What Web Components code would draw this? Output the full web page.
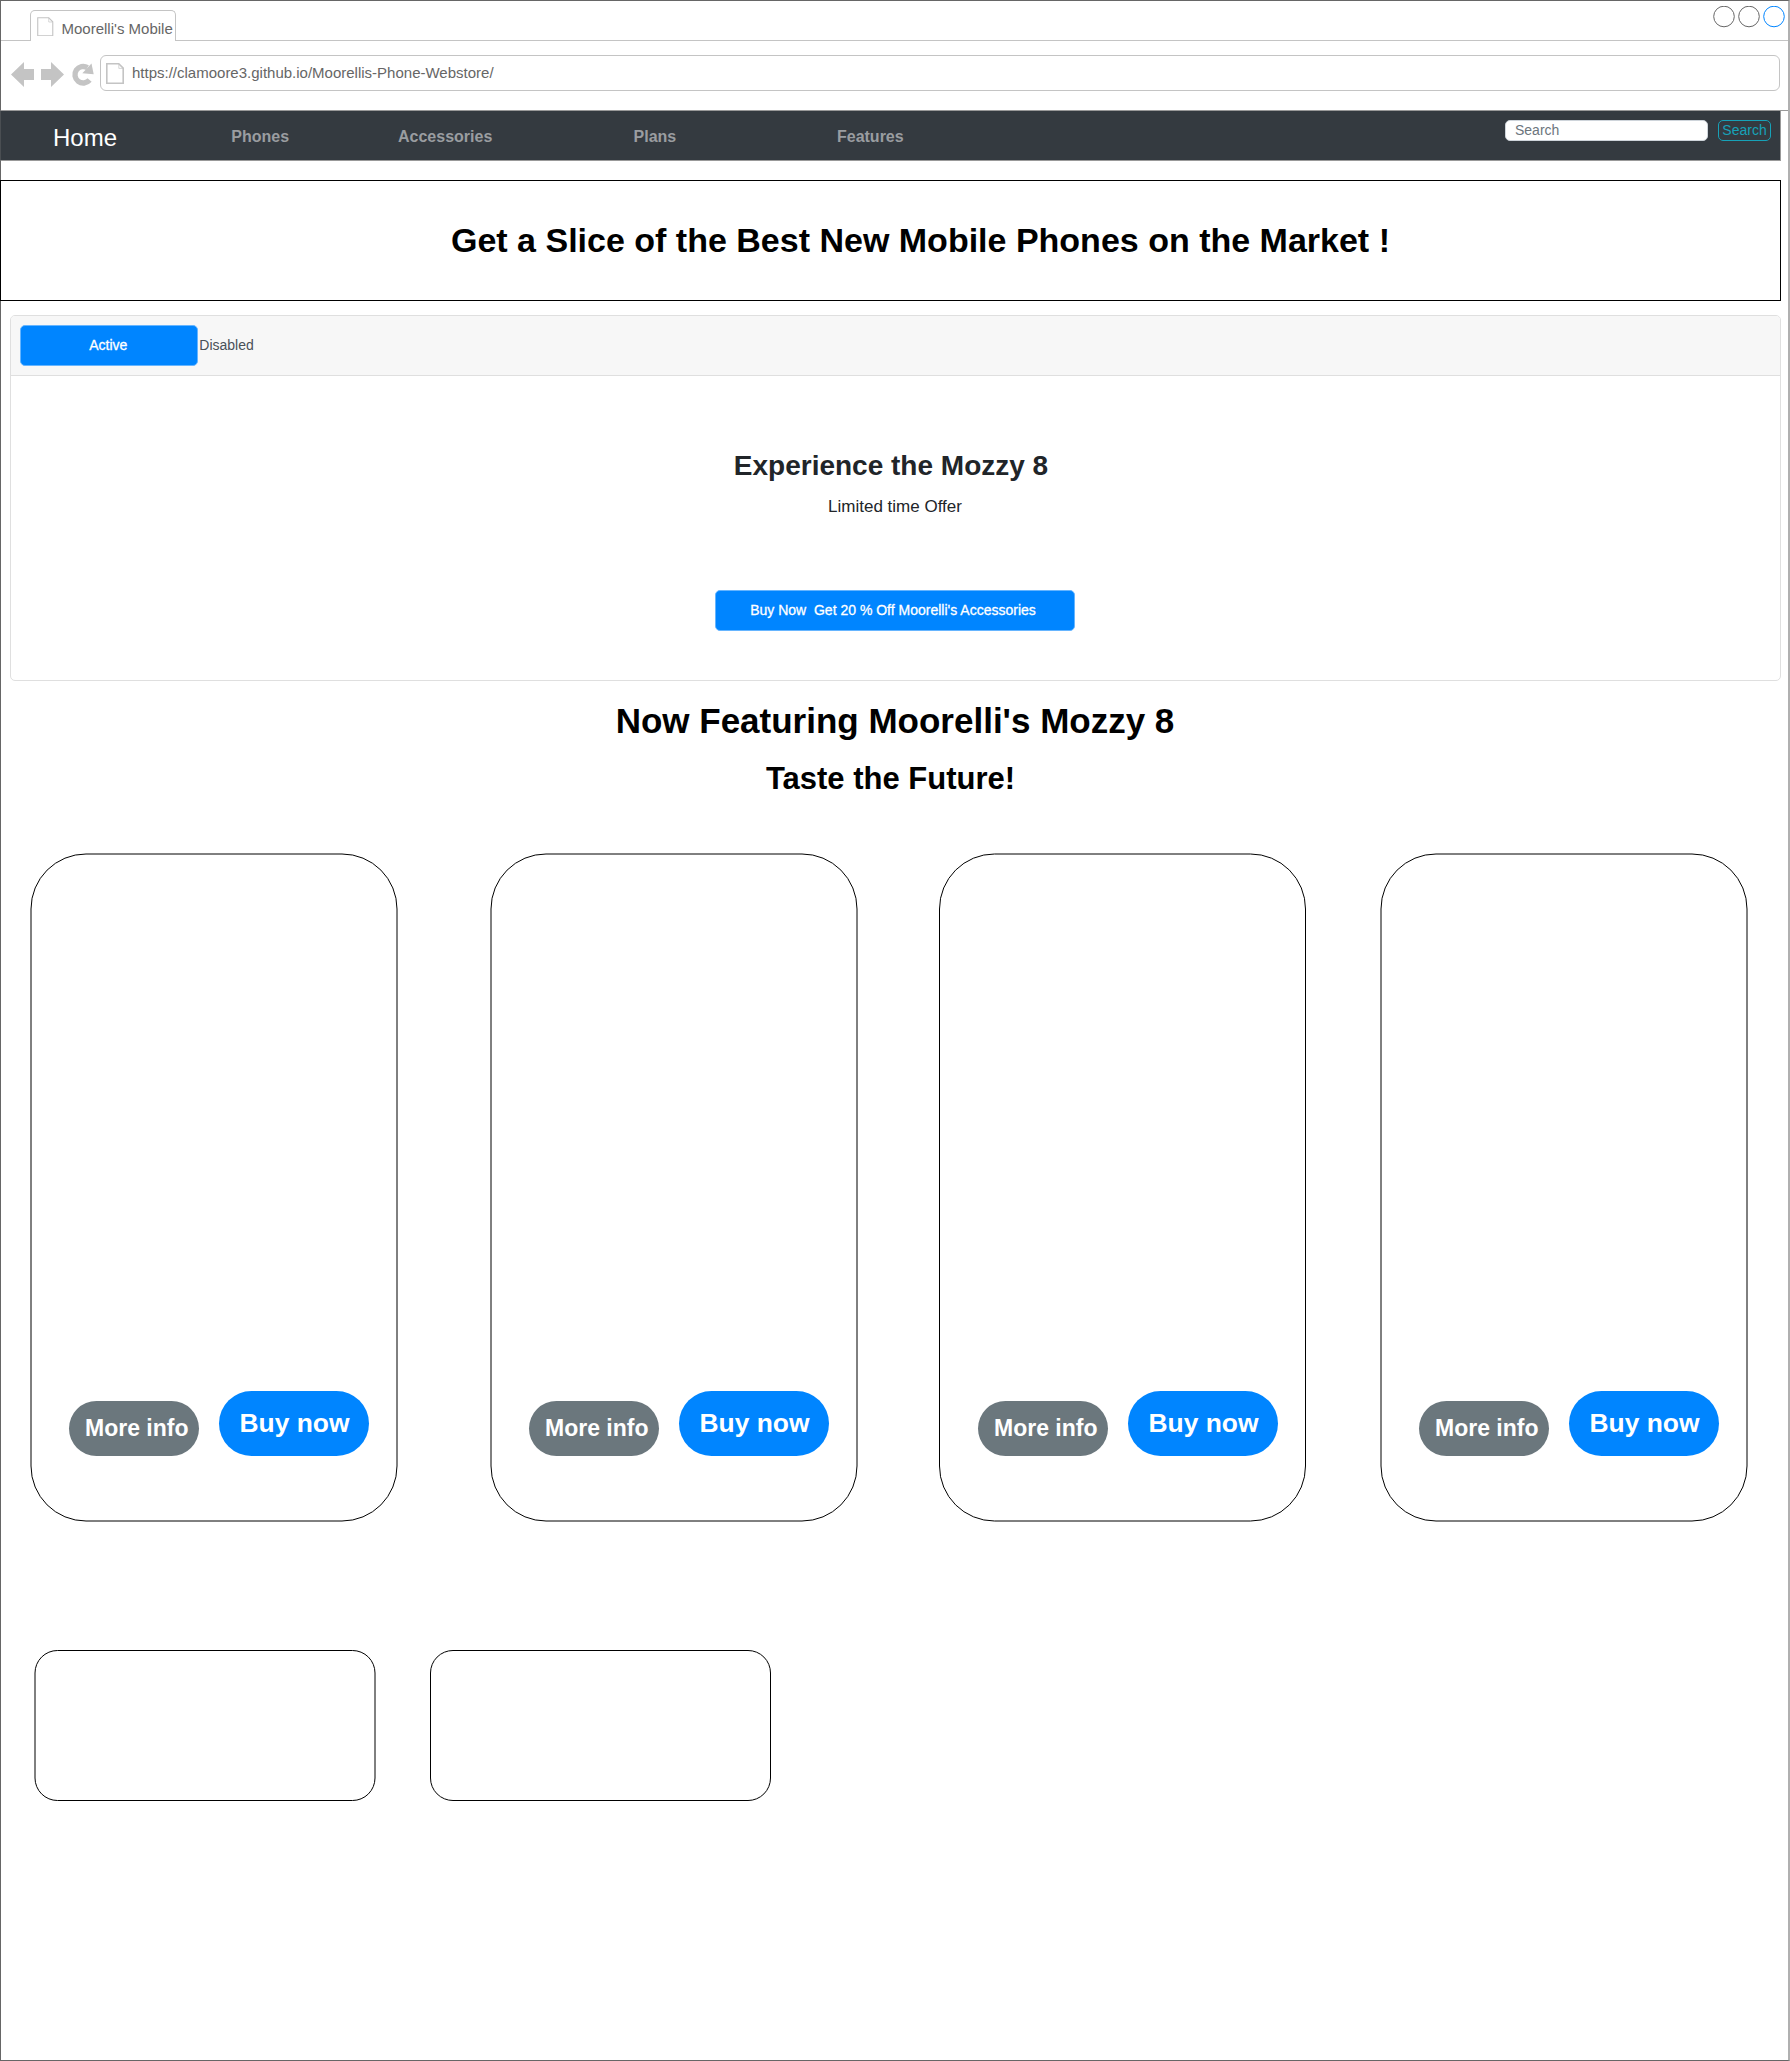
<!DOCTYPE html>
<html lang="en">
<head>
<meta charset="utf-8">
<title>Moorelli's Mobile</title>
<style>
html,body{margin:0;padding:0;background:#fff}
body{font-family:"Liberation Sans",Arial,sans-serif;color:#000}
</style>
</head>
<body>
<browser-window>
  <site-nav></site-nav>
  <hero-banner>Get a Slice of the Best New Mobile Phones on the Market !</hero-banner>
  <promo-card></promo-card>
  <feature-title></feature-title>
  <product-row></product-row>
  <tile-row></tile-row>
</browser-window>
<script>
function define(name, html) {
  const t = document.createElement('template');
  t.innerHTML = html;
  customElements.define(name, class extends HTMLElement {
    constructor() {
      super();
      this.attachShadow({mode: 'open'}).appendChild(t.content.cloneNode(true));
    }
  });
}

define('page-icon', `<style>:host{display:block;flex:none}svg{display:block;width:100%;height:100%}
.o{stroke-width:var(--sw,1)}.c{stroke-opacity:.7}</style>
<svg viewBox="0 0 18 21" preserveAspectRatio="none" fill="none" stroke="#c4c4c4">
<path class="o" d="M.8 .8H12.8L17.2 5.2V20.2H.8Z"/><path class="c" d="M12.8 1V5.4H17"/></svg>`);

define('tab-strip', `<style>
:host{display:flex;height:41px;box-sizing:border-box;align-items:flex-end}
.l{width:29px;border-bottom:1px solid #c4c4c4}
.tab{box-sizing:border-box;width:146px;height:31px;border:1px solid #c4c4c4;border-bottom:0;border-radius:5px 5px 0 0;display:flex;align-items:center;padding:4px 0 0 6px;white-space:nowrap;font-size:15px;line-height:17px;color:#666}
.tab page-icon{width:16.5px;height:19.5px;margin:-3px 8px 0 0}
.r{flex:1;height:39px;border-bottom:1px solid #c4c4c4;display:flex;justify-content:flex-end;padding:4px 3px 0 0;box-sizing:border-box}
svg{display:block}
</style>
<div class="l"></div><div class="tab"><page-icon style="--sw:1.2"></page-icon><span>Moorelli's Mobile</span></div>
<div class="r"><svg width="72" height="22" fill="none"><circle cx="11" cy="10.5" r="10.3" stroke="#666"/><circle cx="36" cy="10.5" r="10.3" stroke="#666"/><circle cx="61" cy="10.5" r="10.3" stroke="#0085ff"/></svg></div>`);

define('address-bar', `<style>
:host{display:flex;height:70px;box-sizing:border-box;padding:14px 8px 0 10px;border-bottom:1px solid #999;align-items:flex-start}
svg{display:block;margin-top:7px;width:89px;height:26px;flex:none}
.f{box-sizing:border-box;flex:1;height:36px;border:1px solid #c4c4c4;border-radius:6px;display:flex;align-items:center;padding-left:5px;font-size:15px;color:#666}
.f span{padding-bottom:2px}
page-icon{width:18px;height:21px;margin-right:8px}
</style>
<svg viewBox="11 62 89 26"><g fill="#c4c4c4"><path d="M11 74.5 24 62V69H34V80H24V87Z"/><path d="M64 74.5 51 62V69H41V80H51V87Z"/></g>
<path d="M89.6 80.1A8.3 8.3 0 1 1 87.5 67.6" fill="none" stroke="#c4c4c4" stroke-width="5.4"/><path fill="#c4c4c4" d="M91.5 63.5 93.7 74.3 82.3 73.2Z"/></svg>
<div class="f"><page-icon style="--sw:1.6"></page-icon><span>https://clamoore3.github.io/Moorellis-Phone-Webstore/</span></div>`);

define('browser-window', `<style>
:host{display:block;box-sizing:border-box;width:1790px;height:2061px;border:1px solid #666;border-right:2px solid #b0b0b0}
tab-strip{margin-top:-1px}
main{display:block;margin-left:-1px}
</style><tab-strip></tab-strip><address-bar></address-bar><main><slot></slot></main>`);

define('search-form', `<style>
:host{display:flex;gap:10px;font-size:14px}
.i,.b{box-sizing:border-box;height:21px;border-radius:5px;display:flex;align-items:center;padding-bottom:1px}
.i{width:203px;background:#fff;border:1px solid #ced4da;color:#6c757d;padding-left:9px}
.b{width:53px;border:1px solid #17a2b8;color:#17a2b8;justify-content:center}
</style><div class="i">Search</div><div class="b">Search</div>`);

define('site-nav', `<style>
:host{display:flex;box-sizing:border-box;width:1781px;height:51px;margin-top:-1px;background:#343a40;border:1px solid #999;border-left-color:#4a4e52;align-items:center;padding-right:9px}
span{display:block;white-space:nowrap;font-weight:700;font-size:16px;color:#9a9da0;line-height:18px;padding-top:2px;flex:none}
.h{font-size:24px;font-weight:400;color:#fff;line-height:28px;width:178.3px;margin-left:52px;padding-top:5px}
search-form{align-self:flex-start;margin:9px 0 0 auto}
</style><span class="h">Home</span><span style="width:166.7px">Phones</span><span style="width:235.6px">Accessories</span><span style="width:203.4px">Plans</span><span>Features</span><search-form></search-form>`);

define('hero-banner', `<style>
:host{display:flex;box-sizing:border-box;width:1781px;height:121px;margin-top:19px;border:1px solid #000;align-items:center;padding-left:450px;font-size:34px;font-weight:700;white-space:nowrap}
</style><slot></slot>`);

define('bs-button', `<style>
:host{display:flex;box-sizing:border-box;align-items:center;justify-content:center;height:41px;background:#0085ff;border:1px solid #66b5ff;border-radius:5px;color:#fff;font-size:14px;white-space:pre;padding-bottom:2px;-webkit-text-stroke:.3px #fff}
</style><slot></slot>`);

define('promo-card', `<style>
:host{display:block;box-sizing:border-box;width:1771px;height:366px;margin:14px 0 0 10px;border:1px solid #dfdfdf;border-radius:5px;color:#212529}
header{display:flex;align-items:center;height:59px;border-bottom:1px solid #dfdfdf;background:#f7f7f7;border-radius:4px 4px 0 0;padding-left:9px;font-size:14px;color:#495057;gap:1.3px}
header bs-button{box-sizing:border-box;width:178px;padding-right:1.5px}
header span{padding-bottom:2px}
section{display:flex;flex-direction:column;align-items:center;padding-right:1px}
h2{margin:74px 8px 0 0;font-size:28px;line-height:32px;font-weight:700}
p{margin:15px 0 0;font-size:17px;line-height:20px}
section bs-button{width:360px;margin-top:73px;padding-right:4px}
</style><header><bs-button>Active</bs-button><span>Disabled</span></header>
<section><h2>Experience the Mozzy 8</h2><p>Limited time Offer</p><bs-button>Buy Now&nbsp; Get 20 % Off Moorelli's Accessories</bs-button></section>`);

define('feature-title', `<style>
:host{display:flex;flex-direction:column;align-items:center;width:1790px;height:172px}
h1{margin:20px 0 0;font-size:35px;line-height:40px}
h2{margin:20px 9px 0 0;font-size:31px;line-height:36px}
</style><h1>Now Featuring Moorelli's Mozzy 8</h1><h2>Taste the Future!</h2>`);

define('pill-button', `<style>
:host{display:flex;box-sizing:border-box;align-items:center;color:#fff;font-weight:700;white-space:nowrap}
:host([kind=info]){width:130px;height:55.5px;border-radius:28px;background:#6b777d;font-size:23px;padding-left:16px}
:host([kind=buy]){width:150px;height:65.5px;border-radius:33px;background:#0085ff;font-size:26.4px;padding-left:20.5px}
</style><slot></slot>`);

define('product-card', `<style>
:host{display:grid;width:368px;height:669px;flex:none}
svg,div{grid-area:1/1}
svg{display:block}
rect{x:var(--x,1px)}
div{display:flex;align-items:flex-end;gap:20px;padding:0 0 66px 39px}
</style><svg width="368" height="669"><rect y="1" width="366" height="667" rx="55" fill="none" stroke="#000"/></svg>
<div><pill-button kind="info">More info</pill-button><pill-button kind="buy">Buy now</pill-button></div>`);

define('product-row', `<style>
:host{display:flex;padding-left:30px}
</style><product-card></product-card><product-card style="margin-left:92px"></product-card><product-card style="margin-left:81px;--x:.5px"></product-card><product-card style="margin-left:73px"></product-card>`);

define('tile-box', `<style>
:host{display:block;width:342px;height:151px}svg{display:block}rect{x:var(--x,.5px)}
</style><svg width="342" height="151"><rect y=".5" width="340" height="150" rx="22.5" fill="none" stroke="#000"/></svg>`);

define('tile-row', `<style>
:host{display:flex;gap:54px;padding:128px 0 0 34px}
</style><tile-box style="--x:1px"></tile-box><tile-box></tile-box>`);
</script>
</body>
</html>
